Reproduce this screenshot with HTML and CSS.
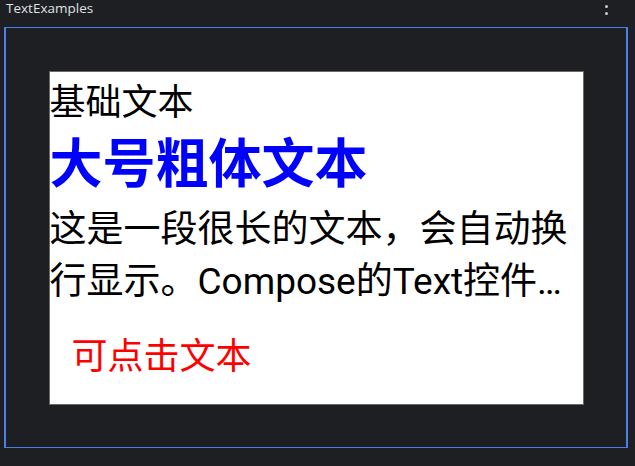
FILE: index.html
```html
<!DOCTYPE html>
<html lang="zh">
<head>
<meta charset="utf-8">
<link rel="stylesheet" href="styles.css">
</head>
<body>
<div class="app">
  <header class="topbar">
    <span class="title">TextExamples</span>
    <span class="kebab"><i></i><i></i></span>
  </header>
  <main class="frame">
    <section class="preview">
      <div class="t-basic">基础文本</div>
      <div class="t-big">大号粗体文本</div>
      <div class="t-long">这是一段很长的文本，会自动换行显示。Compose的Text控件支持多种样式和配置选项。</div>
      <div class="t-click">可点击文本</div>
    </section>
  </main>
</div>
</body>
</html>
```
FILE: styles.css
```css
html, body {
  margin: 0;
  padding: 0;
  background: #1e1f22;
}
.app {
  width: 635px;
  height: 466px;
  display: flex;
  flex-direction: column;
  background: #1e1f22;
}
.topbar {
  height: 27px;
  display: flex;
  align-items: flex-start;
  justify-content: space-between;
  padding: 0 27px 0 6px;
  box-sizing: border-box;
}
.title {
  font-family: "Open Sans", "Noto Sans", sans-serif;
  font-size: 13.5px;
  line-height: 17px;
  color: #dfe1e5;
}
.kebab {
  display: flex;
  flex-direction: column;
  gap: 4px;
  padding-top: 5px;
}
.kebab i {
  display: block;
  width: 3px;
  height: 3px;
  border-radius: 50%;
  background: #c9cbcf;
}
.frame {
  margin-left: 4px;
  width: 624px;
  height: 421px;
  box-sizing: border-box;
  border-style: solid;
  border-color: #4b80ea;
  border-width: 1px 2px;
  display: flex;
  align-items: center;
  justify-content: center;
}
.preview {
  width: 535px;
  height: 334px;
  box-sizing: border-box;
  background: #ffffff;
  border: 1px solid #6a6a6a;
  font-family: Roboto, "Noto Sans CJK SC", sans-serif;
  color: #000;
  display: flex;
  flex-direction: column;
  overflow: hidden;
}
.t-basic {
  margin-top: 3px;
  font-size: 36px;
  line-height: 56px;
}
.t-big {
  font-size: 53px;
  font-weight: 700;
  line-height: 68px;
  color: #0000ff;
}
.t-long {
  margin-top: 5px;
  font-size: 37px;
  line-height: 52px;
  display: -webkit-box;
  -webkit-box-orient: vertical;
  -webkit-line-clamp: 2;
  overflow: hidden;
}
.t-click {
  padding: 25px 22px 19px;
  font-size: 36px;
  line-height: 56px;
  color: #ff0000;
}
```
